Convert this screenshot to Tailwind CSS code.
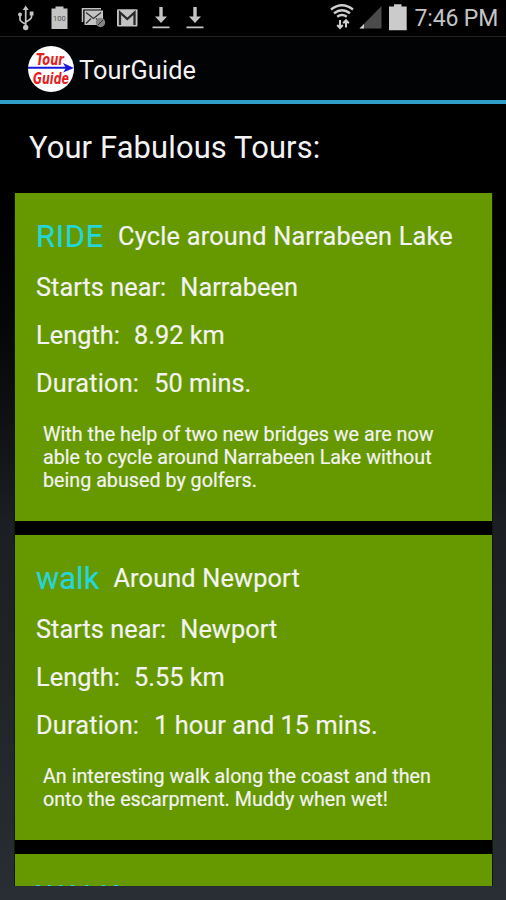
<!DOCTYPE html>
<html lang="en">
<head>
<meta charset="utf-8">
<title>TourGuide</title>
<script src="https://cdn.jsdelivr.net/npm/@tailwindcss/browser@4"></script>
</head>
<body class="w-[506px] h-[900px] overflow-hidden bg-black">
<div class="w-[506px] h-[900px] flex flex-col overflow-hidden bg-linear-to-b from-black from-10% via-[#1b1e22] via-58% to-[#282e34] font-['Roboto',sans-serif] text-[#f3f3f3]">
  <header class="h-[36px] shrink-0 bg-black">
    <div class="flex h-[36px] items-center">
      <svg class="w-[210px] h-[36px]" viewBox="0 0 210 36" fill="none" stroke="#c4c4c4">
        <g stroke-width="1.7"><path d="M25.7 8v20M20 14v5.500q0 2 5.700 4.500M31.500 13v4q0 2-5.800 5"/></g>
        <g fill="#c4c4c4" stroke="none"><path d="M25.700 5.500l3 4.500h-6z"/><circle cx="25.700" cy="27.500" r="2.700"/><circle cx="20" cy="14.500" r="2"/><path d="M29.700 11.500h3.800v4h-3.800z"/>
        <path d="M51.500 8.500h4V6.500h8v2h4V29h-16z"/></g>
        <text x="53" y="20.500" font-size="7.500" fill="#555" stroke="none" font-family="Roboto">100</text>
        <path d="M82.500 22V8.700H101" stroke-width="1.500"/>
        <path d="M84.500 10.500H103V25H84.500z" fill="#c4c4c4" stroke="none"/>
        <path d="M86 12.500l7.500 6 7.500-6M86 23.500l5-5M96 18.500l3 2.500" stroke="#333" stroke-width="1.300"/>
        <circle cx="100.500" cy="22.500" r="4.700" fill="#858585" stroke="none"/><path d="M98 25l5-5" stroke="#333"/>
        <rect x="117" y="9.300" width="20.500" height="17.300" rx="1" fill="#c4c4c4" stroke="none"/>
        <path d="M120 25V12.500l7.300 6.500 7.200-6.500V25" stroke="#292929" stroke-width="2.300"/>
        <g fill="#c4c4c4" stroke="none"><path d="M159.300 7h3.400v9.500h4.300l-6 6.500-6-6.500h4.300zM152.500 26.500h17v1.800h-17z"/><path d="M193.300 7h3.400v9.500h4.300l-6 6.500-6-6.500h4.300zM186.500 26.500h17v1.800h-17z"/></g>
      </svg>
      <svg class="ml-[120px] w-[80px] h-[36px]" viewBox="330 0 80 36" fill="none" stroke="#cfcfcf">
        <path d="M331 9.500q11-8.500 22 0M334 13.300q8-6 16 0M337.200 16.700q4.800-3.500 9.600 0" stroke-width="2.400"/>
        <path d="M340 20v8M337.200 25l2.800 3 2.800-3M346 27.500v-7M343.200 23.300l2.800-3 2.800 3" stroke-width="2"/>
        <path d="M359.500 28.500L381.500 6v22.500z" fill="#4b4b4b" stroke="none"/><path d="M359.500 28.500l4.500-4.500v4.500z" fill="#d0d0d0" stroke="none"/>
        <path d="M389 6.500h5V4.300h7.500v2.200h5.200v23.800H389z" fill="#cbcbcb" stroke="none"/>
      </svg>
      <span class="ml-[4.500px] pt-[2px] text-[23px] leading-[34px] tracking-[-0.15px] text-[#c4c4c4] whitespace-nowrap">7:46 PM</span>
    </div>
  </header>
  <div class="h-[68px] shrink-0 flex items-center bg-[#020304] border-t border-[#202020] border-b-[4px] border-b-[#2f9fc9] pl-[28px]">
    <svg class="w-[46px] h-[46px]" viewBox="0 0 46 46">
      <circle cx="23" cy="23" r="23" fill="#fff"/>
      <g fill="#e42020" font-family="DejaVu Sans" font-style="italic" font-weight="bold">
        <text x="8" y="18.500" font-size="16.500" textLength="28" lengthAdjust="spacingAndGlyphs">Tour</text>
        <text x="5" y="38" font-size="16.500" textLength="36" lengthAdjust="spacingAndGlyphs">Guide</text>
      </g>
      <path d="M0 21.800h40" stroke="#1719d8" stroke-width="2"/><path d="M46 22l-11-5 3 5-3 4.500z" fill="#1719d8"/>
    </svg>
    <h1 class="ml-[5px] pt-[5px] text-[25.300px] leading-[30px] tracking-[0.15px]">TourGuide</h1>
  </div>
  <h2 class="h-[89px] shrink-0 pl-[29px] text-[30.900px] leading-[88px] tracking-[0.13px] whitespace-nowrap">Your Fabulous Tours:</h2>
  <main class="ml-[14px] w-[479px] h-[693px] shrink-0 overflow-hidden bg-black flex flex-col gap-[14px] text-[25.300px] tracking-[0.05px] [-webkit-text-stroke:0.2px] border-l border-r border-[#101800] whitespace-nowrap">
    <article class="h-[328px] shrink-0 bg-[#669900] pl-[21px] pt-[17px]">
      <div class="flex items-center h-[54px] gap-[14px]"><span class="text-[30.900px] tracking-[0.7px] text-[#22d6dc]">RIDE</span><span class="tracking-[0.21px]">Cycle around Narrabeen Lake</span></div>
      <div class="flex items-center h-[48px] gap-[14px]"><span>Starts near:</span><span>Narrabeen</span></div>
      <div class="flex items-center h-[48px] gap-[14px]"><span>Length:</span><span>8.92 km</span></div>
      <div class="flex items-center h-[48px] gap-[15px]"><span class="tracking-[0.2px]">Duration:</span><span>50 mins.</span></div>
      <p class="mt-[15px] pl-[7px] text-[19.700px] leading-[23px] tracking-[0.01px]">With the help of two new bridges we are now<br>able to cycle around Narrabeen Lake without<br>being abused by golfers.</p>
    </article>
    <article class="h-[305px] shrink-0 bg-[#669900] pl-[21px] pt-[17px]">
      <div class="flex items-center h-[54px] gap-[14px]"><span class="text-[30.900px] text-[#22d6dc]">walk</span><span class="tracking-[0.16px]">Around Newport</span></div>
      <div class="flex items-center h-[48px] gap-[14px]"><span>Starts near:</span><span>Newport</span></div>
      <div class="flex items-center h-[48px] gap-[14px]"><span>Length:</span><span>5.55 km</span></div>
      <div class="flex items-center h-[48px] gap-[15px]"><span class="tracking-[0.2px]">Duration:</span><span>1 hour and 15 mins.</span></div>
      <p class="mt-[15px] pl-[7px] text-[19.700px] leading-[23px] tracking-[0.01px]">An interesting walk along the coast and then<br>onto the escarpment. Muddy when wet!</p>
    </article>
    <article class="h-[328px] shrink-0 bg-[#669900] pl-[21px] pt-[16px]">
      <div class="flex items-center h-[54px] gap-[15px]"><span class="text-[30.900px] text-[#22d6dc]">WALK</span><span>Manly to Shelly Beach</span></div>
    </article>
  </main>
</div>
</body>
</html>
